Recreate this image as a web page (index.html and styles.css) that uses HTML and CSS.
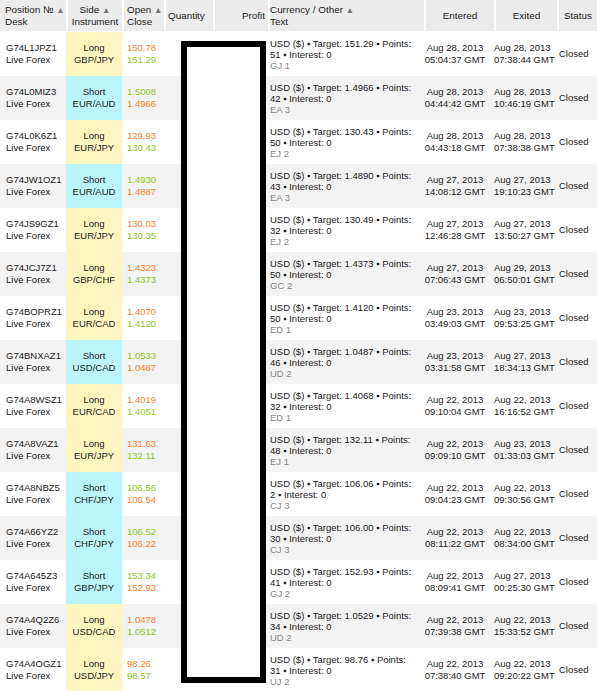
FILE: index.html
```html
<!DOCTYPE html>
<html>
<head>
<meta charset="utf-8">
<link rel="stylesheet" href="styles.css">
</head>
<body>
<div class="wrap">
<table class="trades">
<colgroup>
<col class="w-pos"><col class="w-side"><col class="w-open"><col class="w-qty"><col class="w-profit"><col class="w-cur"><col class="w-ent"><col class="w-exit"><col class="w-status">
</colgroup>
<thead>
<tr>
<th class="c-pos">Position № <span class="arr">▲</span><br>Desk</th>
<th class="c-side">Side <span class="arr">▲</span><br>Instrument</th>
<th class="c-open">Open <span class="arr">▲</span><br>Close</th>
<th class="c-qty">Quantity</th>
<th class="c-profit">Profit</th>
<th class="c-cur">Currency / Other <span class="arr">▲</span><br>Text</th>
<th class="c-ent">Entered</th>
<th class="c-exit">Exited</th>
<th class="c-status">Status</th>
</tr>
</thead>
<tbody>
<tr>
<td class="c-pos">G74L1JPZ1<br>Live Forex</td>
<td class="c-side long">Long<br>GBP/JPY</td>
<td class="c-open"><span class="dn">150.78</span><br><span class="up">151.29</span></td>
<td></td><td></td>
<td class="c-cur"><div>USD ($) ▪ Target: 151.29 ▪ Points:</div><div>51 ▪ Interest: 0</div><div class="code">GJ 1</div></td>
<td class="c-ent">Aug 28, 2013<br>05:04:37 GMT</td>
<td class="c-exit">Aug 28, 2013<br>07:38:44 GMT</td>
<td class="c-status">Closed</td>
</tr>
<tr>
<td class="c-pos">G74L0MIZ3<br>Live Forex</td>
<td class="c-side short">Short<br>EUR/AUD</td>
<td class="c-open"><span class="up">1.5008</span><br><span class="dn">1.4966</span></td>
<td></td><td></td>
<td class="c-cur"><div>USD ($) ▪ Target: 1.4966 ▪ Points:</div><div>42 ▪ Interest: 0</div><div class="code">EA 3</div></td>
<td class="c-ent">Aug 28, 2013<br>04:44:42 GMT</td>
<td class="c-exit">Aug 28, 2013<br>10:46:19 GMT</td>
<td class="c-status">Closed</td>
</tr>
<tr>
<td class="c-pos">G74L0K6Z1<br>Live Forex</td>
<td class="c-side long">Long<br>EUR/JPY</td>
<td class="c-open"><span class="dn">129.93</span><br><span class="up">130.43</span></td>
<td></td><td></td>
<td class="c-cur"><div>USD ($) ▪ Target: 130.43 ▪ Points:</div><div>50 ▪ Interest: 0</div><div class="code">EJ 2</div></td>
<td class="c-ent">Aug 28, 2013<br>04:43:18 GMT</td>
<td class="c-exit">Aug 28, 2013<br>07:38:38 GMT</td>
<td class="c-status">Closed</td>
</tr>
<tr>
<td class="c-pos">G74JW1OZ1<br>Live Forex</td>
<td class="c-side short">Short<br>EUR/AUD</td>
<td class="c-open"><span class="up">1.4930</span><br><span class="dn">1.4887</span></td>
<td></td><td></td>
<td class="c-cur"><div>USD ($) ▪ Target: 1.4890 ▪ Points:</div><div>43 ▪ Interest: 0</div><div class="code">EA 3</div></td>
<td class="c-ent">Aug 27, 2013<br>14:08:12 GMT</td>
<td class="c-exit">Aug 27, 2013<br>19:10:23 GMT</td>
<td class="c-status">Closed</td>
</tr>
<tr>
<td class="c-pos">G74JS9GZ1<br>Live Forex</td>
<td class="c-side long">Long<br>EUR/JPY</td>
<td class="c-open"><span class="dn">130.03</span><br><span class="up">130.35</span></td>
<td></td><td></td>
<td class="c-cur"><div>USD ($) ▪ Target: 130.49 ▪ Points:</div><div>32 ▪ Interest: 0</div><div class="code">EJ 2</div></td>
<td class="c-ent">Aug 27, 2013<br>12:46:28 GMT</td>
<td class="c-exit">Aug 27, 2013<br>13:50:27 GMT</td>
<td class="c-status">Closed</td>
</tr>
<tr>
<td class="c-pos">G74JCJ7Z1<br>Live Forex</td>
<td class="c-side long">Long<br>GBP/CHF</td>
<td class="c-open"><span class="dn">1.4323</span><br><span class="up">1.4373</span></td>
<td></td><td></td>
<td class="c-cur"><div>USD ($) ▪ Target: 1.4373 ▪ Points:</div><div>50 ▪ Interest: 0</div><div class="code">GC 2</div></td>
<td class="c-ent">Aug 27, 2013<br>07:06:43 GMT</td>
<td class="c-exit">Aug 29, 2013<br>06:50:01 GMT</td>
<td class="c-status">Closed</td>
</tr>
<tr>
<td class="c-pos">G74BOPRZ1<br>Live Forex</td>
<td class="c-side long">Long<br>EUR/CAD</td>
<td class="c-open"><span class="dn">1.4070</span><br><span class="up">1.4120</span></td>
<td></td><td></td>
<td class="c-cur"><div>USD ($) ▪ Target: 1.4120 ▪ Points:</div><div>50 ▪ Interest: 0</div><div class="code">ED 1</div></td>
<td class="c-ent">Aug 23, 2013<br>03:49:03 GMT</td>
<td class="c-exit">Aug 23, 2013<br>09:53:25 GMT</td>
<td class="c-status">Closed</td>
</tr>
<tr>
<td class="c-pos">G74BNXAZ1<br>Live Forex</td>
<td class="c-side short">Short<br>USD/CAD</td>
<td class="c-open"><span class="up">1.0533</span><br><span class="dn">1.0487</span></td>
<td></td><td></td>
<td class="c-cur"><div>USD ($) ▪ Target: 1.0487 ▪ Points:</div><div>46 ▪ Interest: 0</div><div class="code">UD 2</div></td>
<td class="c-ent">Aug 23, 2013<br>03:31:58 GMT</td>
<td class="c-exit">Aug 27, 2013<br>18:34:13 GMT</td>
<td class="c-status">Closed</td>
</tr>
<tr>
<td class="c-pos">G74A8WSZ1<br>Live Forex</td>
<td class="c-side long">Long<br>EUR/CAD</td>
<td class="c-open"><span class="dn">1.4019</span><br><span class="up">1.4051</span></td>
<td></td><td></td>
<td class="c-cur"><div>USD ($) ▪ Target: 1.4068 ▪ Points:</div><div>32 ▪ Interest: 0</div><div class="code">ED 1</div></td>
<td class="c-ent">Aug 22, 2013<br>09:10:04 GMT</td>
<td class="c-exit">Aug 22, 2013<br>16:16:52 GMT</td>
<td class="c-status">Closed</td>
</tr>
<tr>
<td class="c-pos">G74A8VAZ1<br>Live Forex</td>
<td class="c-side long">Long<br>EUR/JPY</td>
<td class="c-open"><span class="dn">131.63</span><br><span class="up">132.11</span></td>
<td></td><td></td>
<td class="c-cur"><div>USD ($) ▪ Target: 132.11 ▪ Points:</div><div>48 ▪ Interest: 0</div><div class="code">EJ 1</div></td>
<td class="c-ent">Aug 22, 2013<br>09:09:10 GMT</td>
<td class="c-exit">Aug 23, 2013<br>01:33:03 GMT</td>
<td class="c-status">Closed</td>
</tr>
<tr>
<td class="c-pos">G74A8NBZ5<br>Live Forex</td>
<td class="c-side short">Short<br>CHF/JPY</td>
<td class="c-open"><span class="up">106.56</span><br><span class="dn">106.54</span></td>
<td></td><td></td>
<td class="c-cur"><div>USD ($) ▪ Target: 106.06 ▪ Points:</div><div>2 ▪ Interest: 0</div><div class="code">CJ 3</div></td>
<td class="c-ent">Aug 22, 2013<br>09:04:23 GMT</td>
<td class="c-exit">Aug 22, 2013<br>09:30:56 GMT</td>
<td class="c-status">Closed</td>
</tr>
<tr>
<td class="c-pos">G74A66YZ2<br>Live Forex</td>
<td class="c-side short">Short<br>CHF/JPY</td>
<td class="c-open"><span class="up">106.52</span><br><span class="dn">106.22</span></td>
<td></td><td></td>
<td class="c-cur"><div>USD ($) ▪ Target: 106.00 ▪ Points:</div><div>30 ▪ Interest: 0</div><div class="code">CJ 3</div></td>
<td class="c-ent">Aug 22, 2013<br>08:11:22 GMT</td>
<td class="c-exit">Aug 22, 2013<br>08:34:00 GMT</td>
<td class="c-status">Closed</td>
</tr>
<tr>
<td class="c-pos">G74A645Z3<br>Live Forex</td>
<td class="c-side short">Short<br>GBP/JPY</td>
<td class="c-open"><span class="up">153.34</span><br><span class="dn">152.93</span></td>
<td></td><td></td>
<td class="c-cur"><div>USD ($) ▪ Target: 152.93 ▪ Points:</div><div>41 ▪ Interest: 0</div><div class="code">GJ 2</div></td>
<td class="c-ent">Aug 22, 2013<br>08:09:41 GMT</td>
<td class="c-exit">Aug 27, 2013<br>00:25:30 GMT</td>
<td class="c-status">Closed</td>
</tr>
<tr>
<td class="c-pos">G74A4Q2Z6<br>Live Forex</td>
<td class="c-side long">Long<br>USD/CAD</td>
<td class="c-open"><span class="dn">1.0478</span><br><span class="up">1.0512</span></td>
<td></td><td></td>
<td class="c-cur"><div>USD ($) ▪ Target: 1.0529 ▪ Points:</div><div>34 ▪ Interest: 0</div><div class="code">UD 2</div></td>
<td class="c-ent">Aug 22, 2013<br>07:39:38 GMT</td>
<td class="c-exit">Aug 22, 2013<br>15:33:52 GMT</td>
<td class="c-status">Closed</td>
</tr>
<tr>
<td class="c-pos">G74A4OGZ1<br>Live Forex</td>
<td class="c-side long">Long<br>USD/JPY</td>
<td class="c-open"><span class="dn">98.26</span><br><span class="up">98.57</span></td>
<td></td><td></td>
<td class="c-cur"><div>USD ($) ▪ Target: 98.76 ▪ Points:</div><div>31 ▪ Interest: 0</div><div class="code">UJ 2</div></td>
<td class="c-ent">Aug 22, 2013<br>07:38:40 GMT</td>
<td class="c-exit">Aug 22, 2013<br>09:20:22 GMT</td>
<td class="c-status">Closed</td>
</tr>
</tbody>
</table>
<div class="redact"></div>
</div>
</body>
</html>
```

FILE: styles.css
```css
html, body {
  margin: 0;
  padding: 0;
  background: #fff;
}
body {
  font-family: "Liberation Sans", Arial, sans-serif;
  font-size: 9.5px;
  color: #1a1a1a;
}
.wrap {
  position: relative;
  width: 597px;
}
.trades {
  border-collapse: separate;
  border-spacing: 0;
  table-layout: fixed;
  width: 597px;
}
.w-pos { width: 66px; }
.w-side { width: 56px; }
.w-open { width: 42px; }
.w-qty { width: 49px; }
.w-profit { width: 55px; }
.w-cur { width: 156px; }
.w-ent { width: 70px; }
.w-exit { width: 63px; }
.w-status { width: 40px; }

.trades th {
  background: #ececec;
  font-weight: normal;
  font-size: 9.9px;
  height: 31px;
  padding: 0;
  border-left: 2px solid #fff;
  border-bottom: 1px solid #fff;
  line-height: 12px;
  vertical-align: middle;
  text-align: left;
  white-space: nowrap;
}
.trades th.c-pos { border-left: 0; padding-left: 5px; }
.trades th.c-side { text-align: center; }
.trades th.c-open { padding-left: 3px; }
.trades th.c-qty { padding-left: 2px; }
.trades th.c-profit { text-align: right; padding-right: 3px; }
.trades th.c-cur { padding-left: 0; }
.trades th.c-ent,
.trades th.c-exit,
.trades th.c-status { text-align: center; }
.arr { color: #777; font-size: 8.5px; }

.trades tbody tr { height: 44px; }
.trades tbody tr:nth-child(even) td { background: #f3f3f3; }
.trades td {
  padding: 0;
  vertical-align: middle;
  line-height: 12.3px;
  white-space: nowrap;
}
.trades td.c-pos { padding-left: 6px; }
.trades td.c-side { text-align: center; }
.trades tbody tr td.long { background: #fff5c1; }
.trades tbody tr td.short { background: #baf5fb; }
.trades td.c-open { padding-left: 5px; }
.trades td.c-cur { padding-left: 2px; line-height: 11px; }
.trades td.c-ent,
.trades td.c-exit { text-align: center; padding-right: 8px; }
.trades td.c-status { text-align: left; padding-left: 2px; }
.code { color: #888; }
.up { color: #8cc722; }
.dn { color: #ff7e2c; }

.redact {
  position: absolute;
  left: 181px;
  top: 41px;
  width: 85px;
  height: 642px;
  box-sizing: border-box;
  border: 6px solid #000;
  background: #fff;
}
```
